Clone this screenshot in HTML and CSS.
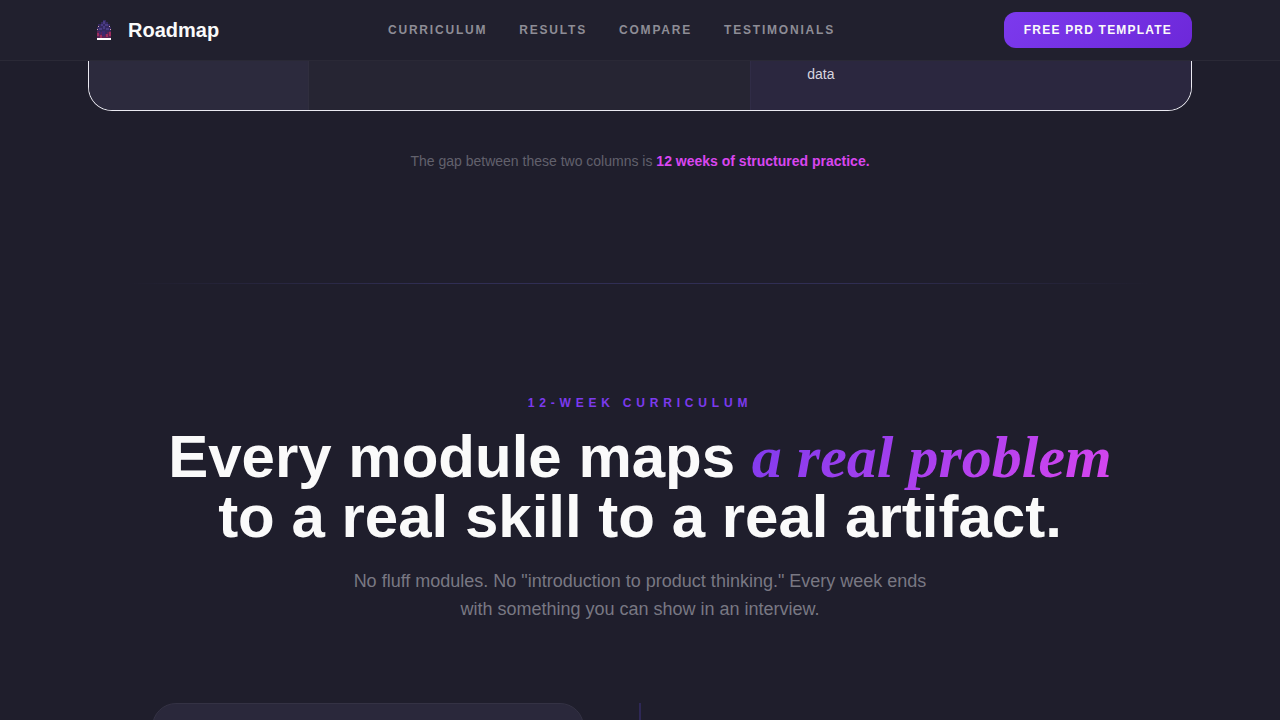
FILE: index.html
```html
<!DOCTYPE html>
<html lang="en">
<head>
<meta charset="utf-8">
<meta name="viewport" content="width=device-width, initial-scale=1">
<title>Roadmap</title>
<link rel="stylesheet" href="styles.css">
</head>
<body>
<header class="site-header">
  <div class="container nav">
    <a class="brand" href="#top">
      <svg class="brand-mark" viewBox="0 0 32 32" aria-hidden="true">
        <path fill="#34295f" d="M15 6h3v2h2v2h2v3h1v10H9V13h1v-3h3V8h2z"/>
        <path fill="#4a3c85" d="M15 7h2v3h-2zM13 10h2v2h-2zM17 10h3v2h-3zM15 12h2v3h-2zM11 14h3v2h-3zM18 14h3v2h-3z"/>
        <path fill="#5c2356" d="M9 17h3v1h2v2h5v-2h2v-1h2v9H9z"/>
        <path fill="#9c2d5e" d="M9 19h2v3H9zM12 21h2v3h-2zM18 20h2v3h-2zM21 18h2v4h-2zM10 24h4v2h-4zM17 24h6v2h-6z"/>
        <path fill="#3d2870" d="M14 17h3v5h-3zM11 18h2v2h-2z"/>
        <path fill="#d29fb9" d="M10 12h1v1h-1zM21 12h1v1h-1zM9 15h1v1H9zM22 15h1v1h-1z"/>
        <path fill="#fff" d="M9 24h14v2H9z"/>
      </svg>
      <span>Roadmap</span>
    </a>
    <nav class="nav-links" aria-label="Main">
      <a href="#curriculum">CURRICULUM</a>
      <a href="#results">RESULTS</a>
      <a href="#compare">COMPARE</a>
      <a href="#testimonials">TESTIMONIALS</a>
    </nav>
    <a class="cta" href="#template">FREE PRD TEMPLATE</a>
  </div>
</header>
<main class="main">
  <section class="container compare" id="compare">
    <div class="compare-frame">
      <table class="compare-table">
        <tbody>
          <tr><th class="topic" scope="row"></th><td class="before"></td><td class="after">data</td></tr>
        </tbody>
      </table>
    </div>
    <p class="compare-note">The gap between these two columns is <strong>12 weeks of structured practice.</strong></p>
  </section>
  <hr class="divider">
  <section class="curriculum" id="curriculum">
    <p class="eyebrow">12-WEEK CURRICULUM</p>
    <h2 class="title">Every module maps <em>a real problem</em><br>to a real skill to a real artifact.</h2>
    <p class="lead">No fluff modules. No "introduction to product thinking." Every week ends with something you can show in an interview.</p>
    <div class="timeline">
      <article class="module"></article>
      <div class="timeline-line"></div>
    </div>
  </section>
</main>
</body>
</html>
```

FILE: styles.css
```css
* { box-sizing: border-box; }

body {
  margin: 0;
  min-height: 100vh;
  display: flex;
  flex-direction: column;
  background: #1f1e2c;
  color: #fafafa;
  font-family: "Liberation Sans", Arial, sans-serif;
}

a { color: inherit; text-decoration: none; }

.container {
  width: 100%;
  max-width: 1152px;
  margin: 0 auto;
  padding: 0 24px;
}

.site-header {
  position: sticky;
  top: 0;
  z-index: 1;
  background: #21202e;
  border-bottom: 1px solid #2a2936;
}

.nav {
  display: flex;
  align-items: center;
  justify-content: space-between;
  padding-top: 12px;
  padding-bottom: 12px;
}

.brand {
  display: flex;
  align-items: center;
  gap: 8px;
  font-size: 20px;
  font-weight: 700;
}

.brand-mark { width: 32px; height: 32px; }

.nav-links {
  display: flex;
  gap: 32px;
  color: #8e8d96;
  font-size: 12px;
  font-weight: 700;
  letter-spacing: 0.15em;
}

.cta {
  padding: 0 20px;
  border-radius: 12px;
  background: linear-gradient(135deg, #7c3aed, #6d28d9);
  font-size: 12px;
  font-weight: 700;
  line-height: 36px;
  letter-spacing: 0.1em;
}

.main { flex: 1; display: flex; flex-direction: column; }

.compare-frame {
  overflow: hidden;
  border: 1px solid #ebeaf2;
  border-top: 0;
  border-radius: 0 0 24px 24px;
}

.compare-table {
  width: 100%;
  table-layout: fixed;
  border-collapse: separate;
  border-spacing: 0;
  font-size: 14px;
  line-height: 22px;
}

.compare-table th, .compare-table td { padding: 2px 32px 25px 56px; }

.topic { width: 20%; background: #2c2a3d; border-right: 1px solid #302e3e; }
.before { background: #262533; }
.after { background: #2b273f; border-left: 1px solid #302c46; color: #d7d5df; }

.compare-note {
  margin: 40px 0 0;
  color: #62616c;
  font-size: 14px;
  line-height: 20px;
  text-align: center;
}

.compare-note strong { color: #d946ef; }

.divider {
  width: 100%;
  max-width: 1024px;
  height: 1px;
  margin: 112px auto 111px;
  border: 0;
  background: linear-gradient(90deg, transparent, #302e54 30%, #302e54 70%, transparent);
}

.curriculum {
  flex: 1;
  display: flex;
  flex-direction: column;
  text-align: center;
}

.eyebrow {
  margin: 0 0 16px;
  color: #7c3aed;
  font-size: 12px;
  font-weight: 700;
  line-height: 16px;
  letter-spacing: 0.4em;
}

.title {
  margin: 0 0 20px;
  font-size: 60px;
  font-weight: 700;
  line-height: 60px;
}

.title em {
  background: linear-gradient(135deg, #7c3aed, #d946ef);
  background-clip: text;
  -webkit-background-clip: text;
  color: transparent;
  font-family: "Liberation Serif", "Times New Roman", serif;
  font-style: italic;
}

.lead {
  max-width: 576px;
  margin: 0 auto 80px;
  color: #797883;
  font-size: 18px;
  line-height: 28px;
}

.timeline {
  flex: 1 1 16px;
  display: grid;
  grid-template-columns: 1fr 2px 1fr;
  grid-auto-rows: 200px;
  column-gap: 55px;
  width: 100%;
  max-width: 976px;
  min-height: 16px;
  margin: 0 auto;
  overflow: hidden;
}

.module {
  border: 1px solid #343244;
  border-radius: 24px;
  background: #2a283b;
}

.timeline-line { background: #2e2856; }
```
